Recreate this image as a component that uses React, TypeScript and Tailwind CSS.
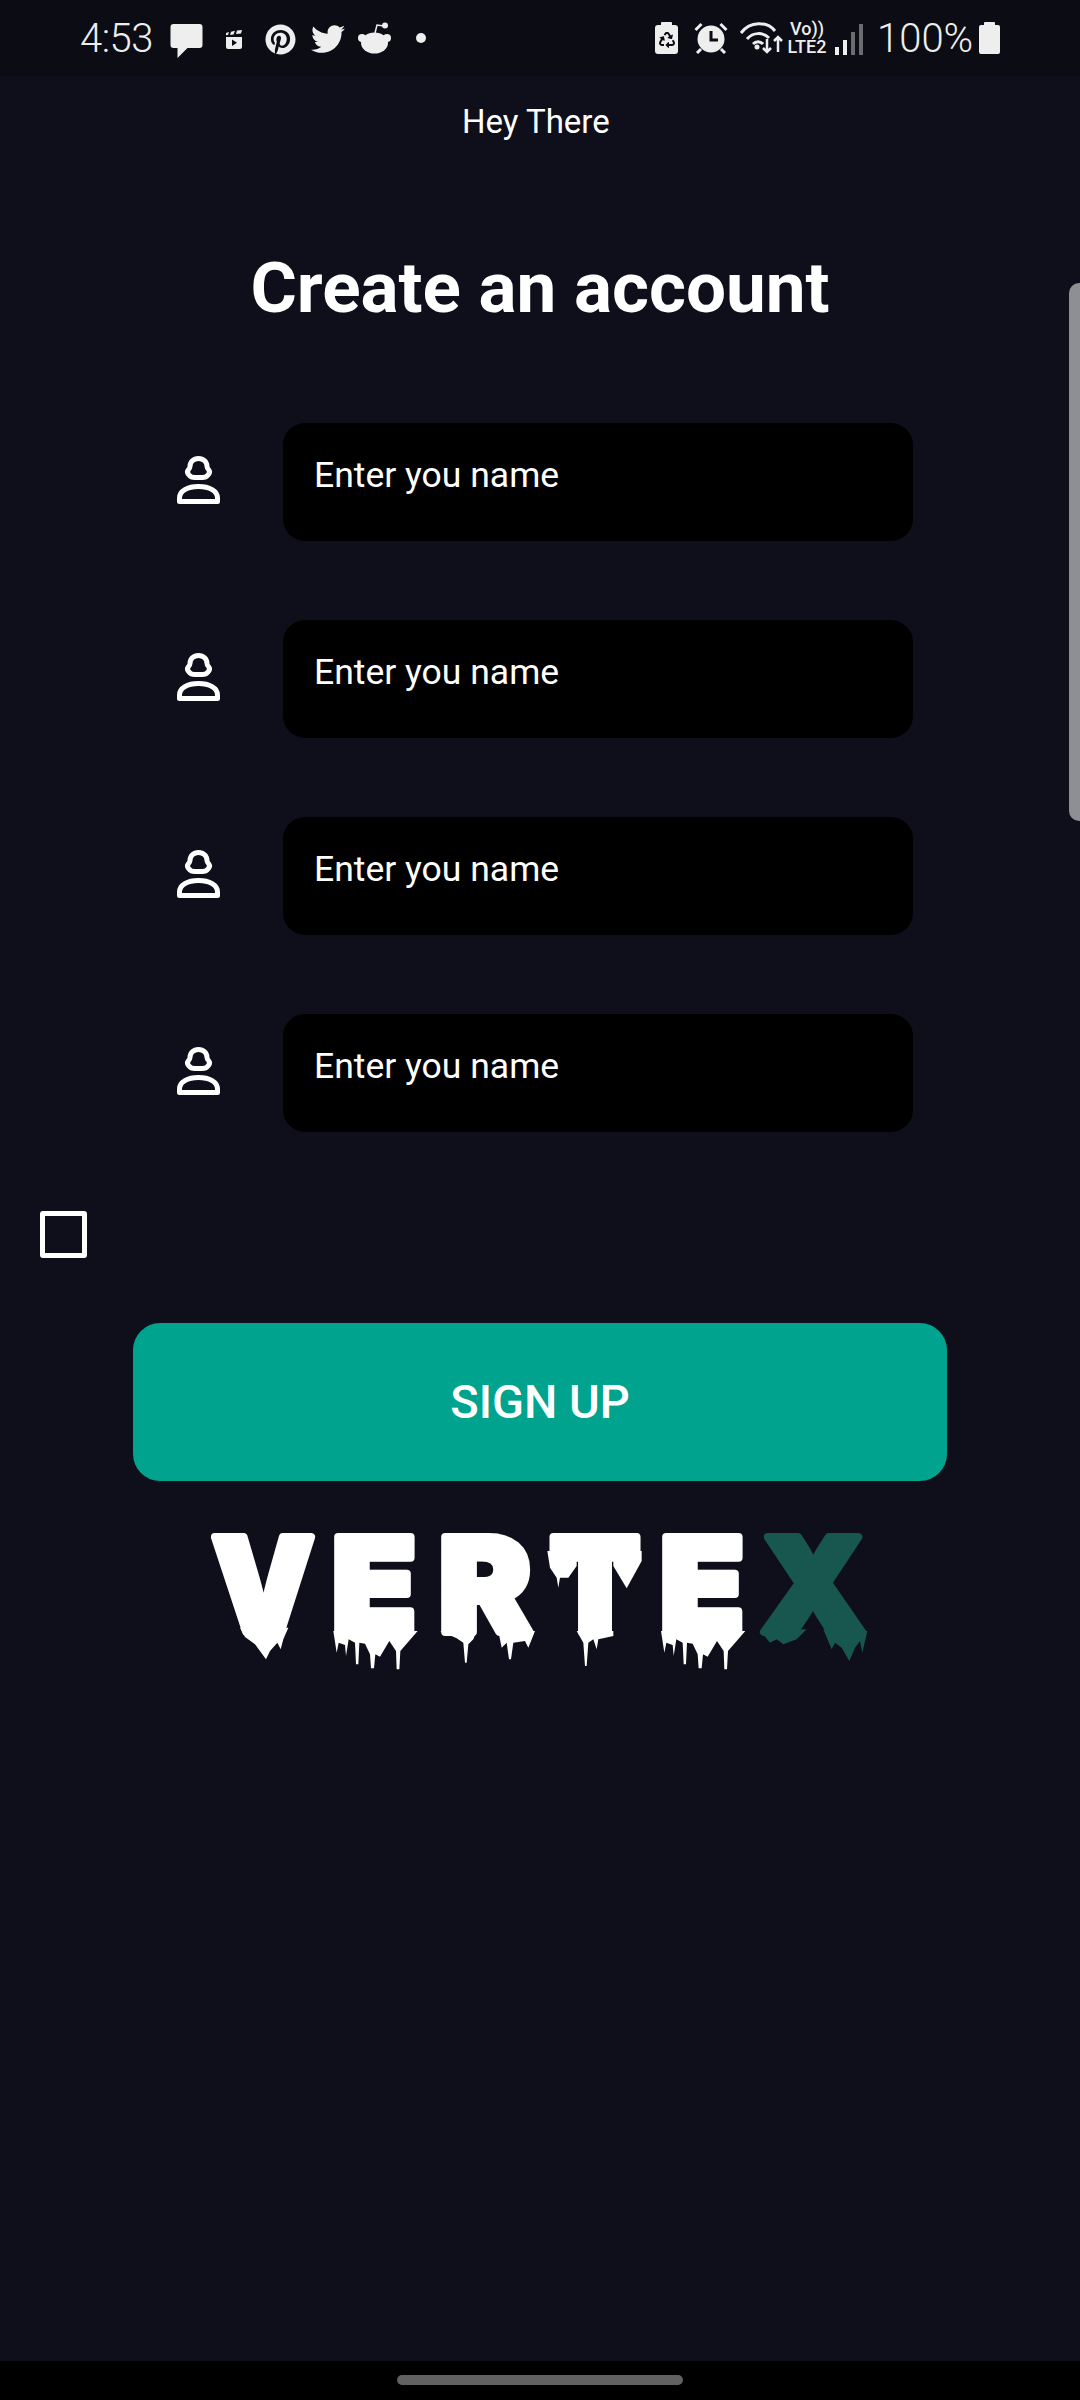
import React from "react";
import { FaPinterest, FaTwitter, FaRecycle } from "react-icons/fa";

const rows = [0, 1, 2, 3];

// drip outlines below the logo letters, measured from the reference
const drip = (ox: number, pts: number[][]) =>
  pts.map(([x, y]) => `${ox - 200 + x / 3},${y / 3 - 15}`).join(" ");

const eDrips = [
  [430, 360], [440, 425], [446, 395], [465, 402], [468, 435], [476, 385], [495, 395], [498, 460], [505, 460],
  [508, 395], [525, 398], [540, 430], [543, 472], [552, 472], [556, 430], [570, 437], [598, 390], [618, 420],
  [620, 475], [628, 475], [631, 420], [683, 360],
];

const PersonIcon = () => (
  <svg width="43" height="48" viewBox="0 0 43 48" fill="none" stroke="white" strokeWidth="5">
    <path d="M21.500 2.500c-5 0-8.500 3.500-8.500 8 0 1-.1 1.500-1.800 3.500-1 1.500-.7 3.500.8 5 1.500 2 4 2.500 6 2.500h7c2 0 4.500-.5 6-2.500 1.500-1.500 1.800-3.500.8-5-1.700-2-1.800-2.500-1.800-3.500 0-4.500-3.500-8-8.500-8z" />
    <path d="M2.500 45.500v-3.500c0-7 8-11.500 19-11.500s19 4.500 19 11.500v3.500z" strokeLinejoin="round" />
  </svg>
);

const Logo = () => (
  <svg width="680" height="175" viewBox="0 -25 680 175" className="block">
    <g
      fill="white"
      stroke="white"
      strokeWidth="8"
      strokeLinejoin="round"
      fontFamily="Inter, sans-serif"
      fontWeight="900"
      fontSize="130"
    >
      <text x="12" y="106" textLength="102" lengthAdjust="spacingAndGlyphs">V</text>
      <text x="132" y="106" textLength="84" lengthAdjust="spacingAndGlyphs">E</text>
      <text x="239" y="106" textLength="92" lengthAdjust="spacingAndGlyphs">R</text>
      <text x="350" y="106" textLength="90" lengthAdjust="spacingAndGlyphs">T</text>
      <text x="460" y="106" textLength="84" lengthAdjust="spacingAndGlyphs">E</text>
    </g>
    <g fill="white">
      <polygon points={drip(190, [[150, 350], [165, 378], [195, 400], [228, 445], [240, 420], [262, 395], [272, 415], [280, 385], [295, 350]])} />
      <polygon points={drip(190, eDrips)} />
      <polygon points={drip(190, [[750, 360], [800, 382], [820, 395], [825, 455], [830, 455], [835, 400], [850, 385], [860, 360]])} />
      <polygon points={drip(190, [[925, 360], [935, 410], [950, 395], [957, 445], [963, 445], [970, 395], [1005, 390], [1015, 410], [1035, 360]])} />
      <polygon points={drip(530, [[52, 120], [60, 170], [80, 200], [85, 230], [90, 200], [115, 200], [140, 165], [140, 120]])} />
      <polygon points={drip(530, [[250, 120], [250, 165], [290, 232], [335, 150], [335, 120]])} />
      <polygon points={drip(530, [[140, 360], [160, 395], [165, 465], [170, 465], [175, 395], [190, 385], [200, 415], [205, 385], [250, 375], [250, 360]])} />
      <polygon points={drip(530, eDrips.map(([x, y]) => [x - 37, y]))} />
    </g>
    <g
      fill="#17574f"
      stroke="#17574f"
      strokeWidth="8"
      strokeLinejoin="round"
      fontFamily="Inter, sans-serif"
      fontWeight="900"
      fontSize="130"
    >
      <text x="561" y="106" textLength="104" lengthAdjust="spacingAndGlyphs">X</text>
    </g>
    <g fill="#17574f">
      <polygon points={drip(530, [[690, 360], [720, 395], [740, 385], [760, 400], [800, 385], [830, 355]])} />
      <polygon points={drip(530, [[880, 355], [905, 415], [915, 395], [935, 410], [958, 450], [975, 410], [990, 390], [997, 425], [1012, 360]])} />
    </g>
  </svg>
);

const StatusBar = () => (
  <div className="h-[76px] bg-[#0b0c14] flex items-center pl-[80px] text-[#eeeeee] font-[Roboto,sans-serif]">
    <span className="w-[73px] text-[40px] font-light leading-none tracking-[-0.500px] mt-[2px]">4:53</span>
    <svg className="ml-[17px] mt-[6px]" width="33" height="34" viewBox="0 0 32 34" fill="#eeeeee">
      <path d="M3 0h26a3 3 0 0 1 3 3v18a3 3 0 0 1-3 3H17l-10 10v-10H3a3 3 0 0 1-3-3V3a3 3 0 0 1 3-3z" />
    </svg>
    <svg className="ml-[22px] mt-[2px]" width="18" height="19" viewBox="0 0 18 19" fill="#eeeeee">
      <path d="M1 3l3-1-1 3-2 .3zM6 1.800l4-1-1.500 3.700-3.500.5zM12 .5l5-.5-1 3.500-5 .5z" />
      <path d="M1 7h16v10a2 2 0 0 1-2 2H3a2 2 0 0 1-2-2z" />
      <path d="M7 9.500l5 3.200-5 3.300z" fill="#0b0c14" />
    </svg>
    <FaPinterest className="ml-[22px] mt-[2px]" size={31} />
    <FaTwitter className="ml-[15px] mt-[2px]" size={34} />
    <svg className="ml-[13px]" width="33" height="32" viewBox="0 0 33 32" fill="#eeeeee">
      <ellipse cx="16.500" cy="21" rx="13.500" ry="10.500" />
      <circle cx="4" cy="16" r="4" />
      <circle cx="29" cy="16" r="4" />
      <path d="M17 11l2-8 7 1" fill="none" stroke="#eeeeee" strokeWidth="1.500" />
      <circle cx="27" cy="3.500" r="3" />
    </svg>
    <span className="ml-[25px] size-[10px] rounded-full bg-[#eeeeee]" />

    <div className="ml-[229px] relative w-[23px] h-[29px] rounded-[3px] bg-[#eeeeee] flex items-center justify-center mt-[3px]">
      <span className="absolute top-[-3px] left-[6px] w-[11px] h-[3px] bg-[#eeeeee] rounded-t-[1px]" />
      <FaRecycle size={16} color="#0b0c14" />
    </div>
    <svg className="ml-[16px]" width="34" height="32" viewBox="0 0 34 32" fill="none">
      <circle cx="17" cy="17" r="13.500" fill="#eeeeee" />
      <path d="M17 9v9h7" stroke="#0b0c14" strokeWidth="3" />
      <path d="M1.500 8l6-6M32.500 8l-6-6M7 27l-4 4M27 27l4 4" stroke="#eeeeee" strokeWidth="3" />
    </svg>
    <svg className="ml-[12px]" width="43" height="32" viewBox="0 0 43 32" fill="none" stroke="#eeeeee" strokeWidth="3">
      <path d="M1 11C10-1 27-1 35 9M7 17c6-7 16-7 22-1M13 22c3-3 7-3 10 0" />
      <circle cx="17" cy="25" r="2.500" fill="#eeeeee" stroke="none" />
      <path d="M27 17v13M23 26l4 4 4-4M38 30V15M34 19l4-4 4 4" strokeWidth="2.500" />
    </svg>
    <div className="ml-[3px] w-[42px] flex flex-col items-center font-medium leading-none text-[#eeeeee]">
      <span className="text-[18px] h-[18px]">Vo))</span>
      <span className="text-[18px]">LTE2</span>
    </div>
    <svg className="ml-[7px] mt-[2px]" width="28" height="32" viewBox="0 0 28 32">
      <rect x="0" y="24" width="4" height="8" fill="#eeeeee" />
      <rect x="8" y="17" width="4" height="15" fill="#eeeeee" />
      <rect x="16" y="9" width="4" height="23" fill="#6b6c70" />
      <rect x="24" y="1" width="4" height="31" fill="#6b6c70" />
    </svg>
    <span className="ml-[14px] w-[97px] text-[40px] font-light leading-none tracking-[0px] mt-[2px]">100%</span>
    <div className="ml-[5px] relative w-[21px] h-[29px] rounded-[2px] bg-[#eeeeee] mt-[3px]">
      <span className="absolute top-[-3px] left-[5px] w-[11px] h-[3px] bg-[#eeeeee] rounded-t-[1px]" />
    </div>
  </div>
);

const App = () => {
  return (
    <div className="relative w-[1080px] h-[2400px] flex flex-col bg-[#0e0f1a] text-white font-[Roboto,sans-serif]">
      <StatusBar />
      <main className="flex-1 flex flex-col">
        <p className="mt-[26px] ml-[462px] text-[33px] leading-[40px]">Hey There</p>
        <h1 className="mt-[106px] text-center text-[71px] leading-[80px] font-bold">Create an account</h1>
        <div className="mt-[95px] flex flex-col gap-[79px]">
          {rows.map(row => (
            <div key={row} className="flex items-center ml-[177px]">
              <div className="w-[106px] mt-[-5px]">
                <PersonIcon />
              </div>
              <div className="w-[630px] h-[118px] rounded-[22px] bg-black pl-[31px] pt-[30px] text-[35.500px] leading-[44px]">
                Enter you name
              </div>
            </div>
          ))}
        </div>
        <div className="mt-[79px] ml-[40px] size-[47px] rounded-[3px] border-[5px] border-white" />
        <button className="mt-[65px] ml-[133px] w-[814px] h-[158px] rounded-[27px] bg-[#00a38e] text-[47px] font-medium">
          SIGN UP
        </button>
        <div className="mt-[20px] ml-[200px]">
          <Logo />
        </div>
      </main>
      <div className="h-[39px] bg-black flex justify-center pt-[14px]">
        <div className="w-[286px] h-[10px] rounded-full bg-[#616161]" />
      </div>
      <div className="absolute right-0 top-[283px] w-[11px] h-[538px] rounded-l-[10px] bg-[#8e8f94]" />
    </div>
  );
};

export default App;
